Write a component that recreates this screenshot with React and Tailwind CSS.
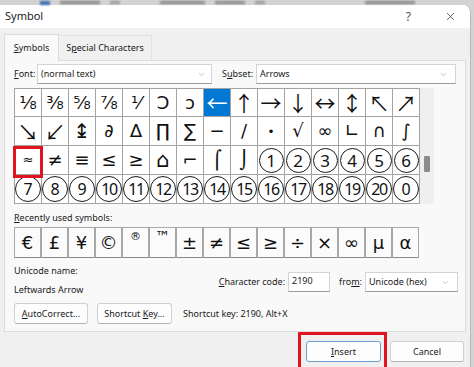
import { ChevronDown, X } from 'lucide-react';

const ui = { fontFamily: '"Noto Sans", "Open Sans", sans-serif' };
const sym = { fontFamily: '"DejaVu Sans", "Noto Sans", "Noto Sans CJK JP", sans-serif' };
const arrowFont = { fontFamily: '"Noto Sans CJK JP", "DejaVu Sans", sans-serif' };

const rows = [
  { h: 'h-[28px]', items: ['⅛', '⅜', '⅝', '⅞', '⅟', 'Ↄ', 'ↄ', '←', '↑', '→', '↓', '↔', '↕', '↖', '↗'] },
  { h: 'h-[29px]', items: ['↘', '↙', '↨', '∂', '∆', '∏', '∑', '−', '∕', '∙', '√', '∞', '∟', '∩', '∫'] },
  { h: 'h-[29px]', items: ['≈', '≠', '≡', '≤', '≥', '⌂', '⌐', '⌠', '⌡', { n: '1' }, { n: '2' }, { n: '3' }, { n: '4' }, { n: '5' }, { n: '6' }] },
  { h: 'h-[29px]', items: ['7', '8', '9', '10', '11', '12', '13', '14', '15', '16', '17', '18', '19', '20', '0'].map((n) => ({ n, big: true })) },
];

const recent = ['€', '£', '¥', '©', '®', '™', '±', '≠', '≤', '≥', '÷', '×', '∞', 'µ', 'α'];

// thin arrows, like the dialog's font
const arrows = '←↑→↓↔↕↖↗↘↙';

function glyphSize(s) {
  if (arrows.includes(s)) return 'text-[21px] leading-none';
  if (s === '↨') return 'text-[20px] leading-none';
  if (s === '∙') return 'text-[12px] leading-none';
  if (s === '⌂') return 'text-[21px] leading-none';
  if (s === '≈') return 'text-[13px]';
  return 'text-[18px] leading-none';
}

function Circled({ n, big }) {
  return (
    <span
      className={
        'flex items-center justify-center rounded-full border border-[#1a1a1a] text-[#111] leading-none ' +
        (big ? 'w-[26px] h-[26px] text-[16px]' : 'w-[25px] h-[25px] text-[17px]') +
        (n.length > 1 ? ' tracking-[-1.5px]' : '')
      }
      style={ui}
    >
      {n}
    </span>
  );
}

function Cell({ item, row, col }) {
  const selected = row === 0 && col === 7;
  const marked = row === 2 && col === 0;
  return (
    <div
      className={
        'relative w-[27px] h-full border-r border-b border-[#a3a3a3] flex items-center justify-center ' +
        (selected ? 'bg-[#0078d4] text-white' : 'bg-white text-[#111]')
      }
    >
      {typeof item === 'string' ? (
        <span className={glyphSize(item)} style={arrows.includes(item) ? arrowFont : sym}>
          {item}
        </span>
      ) : (
        <Circled n={item.n} big={item.big} />
      )}
      {marked && (
        <div className="absolute left-[-2px] top-[0px] w-[30px] h-[32px] border-[3px] border-[#e0141e] z-10" />
      )}
    </div>
  );
}

function Field({ className, children }) {
  return (
    <div className={'h-[20px] bg-white border border-[#d4d4d4] border-b-[#9a9a9a] flex items-center pl-[3px] text-[#1a1a1a] ' + className}>
      {children}
    </div>
  );
}

function Btn({ children, className }) {
  return (
    <div className={'h-[21px] rounded-[3px] bg-[#fdfdfd] border border-[#d0d0d0] border-b-[#b5b5b5] flex items-center justify-center text-[#1a1a1a] ' + className}>
      {children}
    </div>
  );
}

export default function App() {
  return (
    <div className="w-[474px] h-[367px] overflow-hidden bg-[#d3d3d3] text-[9px]" style={ui}>
      <div className="h-[5px] flex items-center gap-[10px] pl-[40px] blur-[1px]">
        <div className="w-[10px] h-[4px] bg-[#3a6fb0]" />
        <div className="w-[40px] h-[3px] bg-[#8a8a8a]" />
        <div className="w-[10px] h-[3px] bg-[#9a9a9a]" />
        <div className="ml-[30px] w-[45px] h-[3px] bg-[#8a8a8a]" />
        <div className="w-[30px] h-[3px] bg-[#8a8a8a]" />
        <div className="w-[10px] h-[3px] bg-[#9a9a9a]" />
        <div className="ml-[90px] w-[50px] h-[3px] bg-[#8a8a8a]" />
      </div>
      <div className="w-[471px] h-[362px] bg-[#f0f0f0] rounded-tr-[8px] border-r border-[#b9b9b9] flex flex-col overflow-hidden">
        <div className="h-[23px] bg-white flex items-center pl-[5px] shrink-0">
          <span className="text-[11px] text-[#1a1a1a]">Symbol</span>
          <span className="ml-auto mr-[33px] text-[12px] text-[#555]">?</span>
          <X size={13} strokeWidth={1.2} className="mr-[13px] text-[#222]" />
        </div>
        <div className="h-[32px] flex items-end pl-[4px] shrink-0">
          <div className="w-[55px] h-[27px] bg-[#f9f9f9] border border-b-0 border-[#dcdcdc] flex items-center justify-center text-[#1a1a1a] relative top-[1px]">
            <span><u>S</u>ymbols</span>
          </div>
          <div className="w-[93px] h-[25px] flex items-center justify-center text-[#1a1a1a] border-t border-r border-[#e2e2e2]">
            <span>S<u>p</u>ecial Characters</span>
          </div>
        </div>
        <div className="ml-[4px] w-[462px] h-[272px] shrink-0 bg-[#f9f9f9] border border-[#dcdcdc] pl-[9px] flex flex-col">
          <div className="mt-[3px] h-[20px] flex items-center">
            <span className="w-[23px] text-[#1a1a1a]"><u>F</u>ont:</span>
            <Field className="w-[175px]">
              <span>(normal text)</span>
              <ChevronDown size={9} strokeWidth={1.3} className="ml-auto mr-[5px] text-[#888]" />
            </Field>
            <span className="ml-[10px] w-[34px] text-[#1a1a1a]">S<u>u</u>bset:</span>
            <Field className="w-[200px]">
              <span>Arrows</span>
              <ChevronDown size={9} strokeWidth={1.3} className="ml-auto mr-[7px] text-[#888]" />
            </Field>
          </div>
          <div className="mt-[4px] flex">
            <div className="border-l border-t border-[#a3a3a3] flex flex-col">
              {rows.map((r, ri) => (
                <div key={ri} className={'flex ' + r.h}>
                  {r.items.map((it, ci) => (
                    <Cell key={ci} item={it} row={ri} col={ci} />
                  ))}
                </div>
              ))}
            </div>
            <div className="w-[14px] h-[116px] bg-[#efefef] flex flex-col items-center pt-[68px]">
              <div className="w-[6px] h-[16px] bg-[#8c8c8c] rounded-[1px]" />
            </div>
          </div>
          <div className="mt-[7px] h-[14px] flex items-center text-[#1a1a1a]">
            <span><u>R</u>ecently used symbols:</span>
          </div>
          <div className="mt-[2px] flex">
            {recent.map((s, i) => (
              <div key={i} className="w-[27px] h-[31px] bg-[#fbfbfb] border border-[#a8a8a8] border-b-[#8a8a8a] flex items-center justify-center text-[#111]">
                <span
                  className={
                    s === '®'
                      ? 'text-[11px] -translate-y-[5px]'
                      : s === '™'
                        ? 'text-[15px] leading-none -translate-y-[5px]'
                        : 'text-[18px] leading-none'
                  }
                  style={sym}
                >
                  {s}
                </span>
              </div>
            ))}
          </div>
          <div className="mt-[4px] flex text-[#1a1a1a]">
            <div className="flex flex-col">
              <div className="h-[18px] flex items-center">Unicode name:</div>
              <div className="h-[20px] flex items-center">Leftwards Arrow</div>
            </div>
            <div className="ml-auto mr-[7px] pt-[10px] flex items-start">
              <div className="h-[20px] flex items-center mr-[3px]"><span><u>C</u>haracter code:</span></div>
              <Field className="w-[42px] !items-start pt-[1px]">2190</Field>
              <div className="h-[20px] flex items-center ml-[9px] mr-[3px]"><span>fro<u>m</u>:</span></div>
              <Field className="w-[93px]">
                <span>Unicode (hex)</span>
                <ChevronDown size={9} strokeWidth={1.3} className="ml-auto mr-[7px] text-[#888]" />
              </Field>
            </div>
          </div>
          <div className="mt-[3px] flex items-center text-[#1a1a1a]">
            <Btn className="w-[74px]"><span><u>A</u>utoCorrect...</span></Btn>
            <Btn className="ml-[9px] w-[75px]"><span>Shortcut <u>K</u>ey...</span></Btn>
            <span className="ml-[11px]">Shortcut key: 2190, Alt+X</span>
          </div>
        </div>
        <div className="flex justify-end items-start pr-[6px]">
          <div className="border-[3px] border-[#e0141e] pl-[5px] pr-[3px] pt-[6px] pb-[8px]">
            <Btn className="w-[75px] !border-[#6c9fd6]"><span><u>I</u>nsert</span></Btn>
          </div>
          <Btn className="ml-[3px] mt-[9px] w-[74px]">Cancel</Btn>
        </div>
      </div>
    </div>
  );
}
